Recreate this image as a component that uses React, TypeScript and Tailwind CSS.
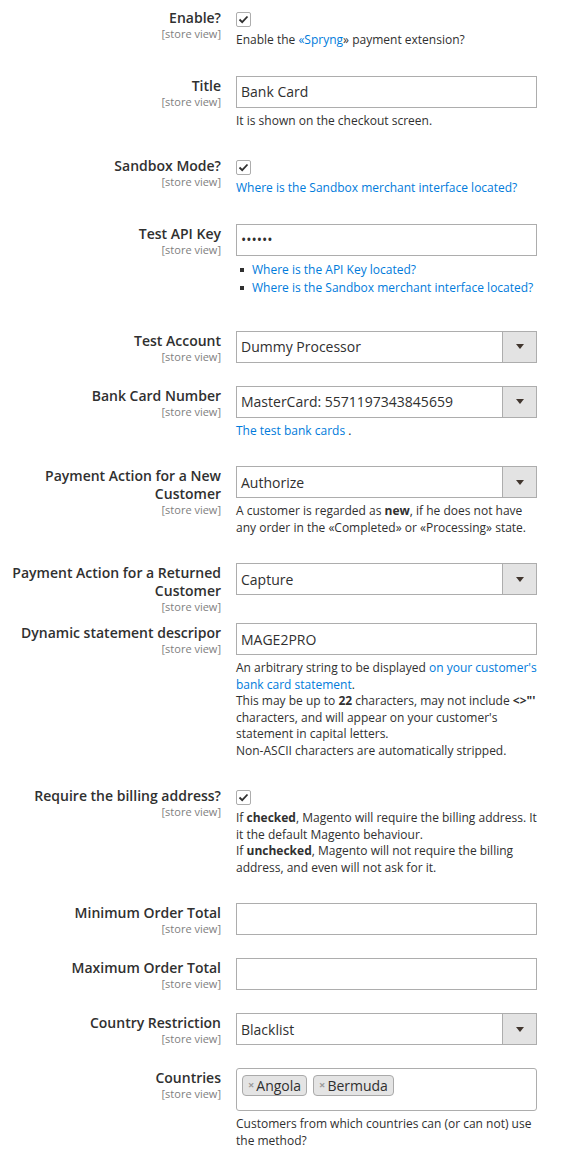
import type { ReactNode } from 'react';

const font = { fontFamily: '"Open Sans", "Noto Sans", Arial, sans-serif' };

function StoreView() {
  return <div className="text-[11px] leading-[13px] text-[#808080] font-normal">[store view]</div>;
}

function Row({ label, children }: { label: ReactNode; children: ReactNode }) {
  return (
    <div className="flex">
      <div className="w-[221px] shrink-0 text-right pt-[1px] pb-[10px]">
        <div className="text-[14px] leading-[18px] font-semibold text-[#303030]">{label}</div>
        <StoreView />
      </div>
      <div className="w-[301px] shrink-0 ml-[15px] pb-[23px]">{children}</div>
    </div>
  );
}

function Note({ children }: { children: ReactNode }) {
  return <div className="mt-[5px] mb-[4px] text-[12px] leading-[16.5px] text-[#303030] whitespace-nowrap">{children}</div>;
}

function Link({ children }: { children: ReactNode }) {
  return <span className="text-[#007bdb]">{children}</span>;
}

function Checkbox() {
  return (
    <div className="mt-[4px] w-[15px] h-[15px] border border-[#adadad] rounded-[2px] bg-white flex items-center justify-center">
      <svg width="11" height="9" viewBox="0 0 11 9" fill="none">
        <path d="M1.5 4.5 L4.2 7.2 L9.5 1.5" stroke="#303030" strokeWidth="1.8" />
      </svg>
    </div>
  );
}

function TextInput({ value }: { value?: string }) {
  return (
    <div className="h-[32px] border border-[#adadad] bg-white flex items-center pl-[4px] text-[14px] text-[#303030]">
      {value}
    </div>
  );
}

function Select({ value }: { value: string }) {
  return (
    <div className="h-[32px] border border-[#adadad] bg-white flex text-[14px] text-[#303030]">
      <div className="flex-1 flex items-center pl-[4px]">{value}</div>
      <div className="w-[34px] bg-[#e3e3e3] border-l border-[#adadad] flex items-center justify-center">
        <svg width="8" height="5" viewBox="0 0 8 5">
          <path d="M0 0 H8 L4 5 Z" fill="#41362f" />
        </svg>
      </div>
    </div>
  );
}

function Tag({ children }: { children: ReactNode }) {
  return (
    <span className="inline-flex items-center h-[21px] px-[5px] border border-[#aaaaaa] rounded-[4px] bg-[#e4e4e4] text-[14px] text-[#303030]">
      <span className="text-[#999999] text-[11px] mr-[2px] font-bold">×</span>
      {children}
    </span>
  );
}

export default function App() {
  return (
    <div className="min-h-[1165px] bg-white pt-[8px]" style={font}>
      <Row label="Enable?">
        <Checkbox />
        <Note>
          Enable the <Link>«Spryng</Link>» payment extension?
        </Note>
      </Row>

      <Row label="Title">
        <TextInput value="Bank Card" />
        <Note>It is shown on the checkout screen.</Note>
      </Row>

      <Row label="Sandbox Mode?">
        <Checkbox />
        <Note>
          <Link>Where is the Sandbox merchant interface located?</Link>
        </Note>
      </Row>

      <Row label="Test API Key">
        <TextInput value="••••••" />
        <ul className="mt-[5px] mb-[11px] text-[12px] leading-[18px]">
          {['Where is the API Key located?', 'Where is the Sandbox merchant interface located?'].map((t) => (
            <li key={t} className="flex items-center whitespace-nowrap">
              <span className="w-[4px] h-[4px] bg-[#303030] ml-[4px] mr-[8px]" />
              <Link>{t}</Link>
            </li>
          ))}
        </ul>
      </Row>

      <Row label="Test Account">
        <Select value="Dummy Processor" />
      </Row>

      <Row label="Bank Card Number">
        <Select value="MasterCard: 5571197343845659" />
        <Note>
          <Link>The test bank cards</Link> .
        </Note>
      </Row>

      <Row label={<>Payment Action for a New<br />Customer</>}>
        <Select value="Authorize" />
        <Note>
          A customer is regarded as <b>new</b>, if he does not have
          <br />
          any order in the «Completed» or «Processing» state.
        </Note>
      </Row>

      <Row label={<>Payment Action for a Returned<br />Customer</>}>
        <Select value="Capture" />
      </Row>

      <Row label="Dynamic statement descripor">
        <TextInput value="MAGE2PRO" />
        <Note>
          An arbitrary string to be displayed <Link>on your customer's</Link>
          <br />
          <Link>bank card statement</Link>.
          <br />
          This may be up to <b>22</b> characters, may not include <b>{'<>"\''}</b>
          <br />
          characters, and will appear on your customer's
          <br />
          statement in capital letters.
          <br />
          Non-ASCII characters are automatically stripped.
        </Note>
      </Row>

      <Row label="Require the billing address?">
        <Checkbox />
        <Note>
          If <b>checked</b>, Magento will require the billing address. It
          <br />
          it the default Magento behaviour.
          <br />
          If <b>unchecked</b>, Magento will not require the billing
          <br />
          address, and even will not ask for it.
        </Note>
      </Row>

      <Row label="Minimum Order Total">
        <TextInput />
      </Row>

      <Row label="Maximum Order Total">
        <TextInput />
      </Row>

      <Row label="Country Restriction">
        <Select value="Blacklist" />
      </Row>

      <Row label="Countries">
        <div className="h-[43px] border border-[#adadad] rounded-[3px] bg-white px-[5px] pt-[6px] flex items-start gap-[6px]">
          <Tag>Angola</Tag>
          <Tag>Bermuda</Tag>
        </div>
        <Note>
          Customers from which countries can (or can not) use
          <br />
          the method?
        </Note>
      </Row>
    </div>
  );
}
